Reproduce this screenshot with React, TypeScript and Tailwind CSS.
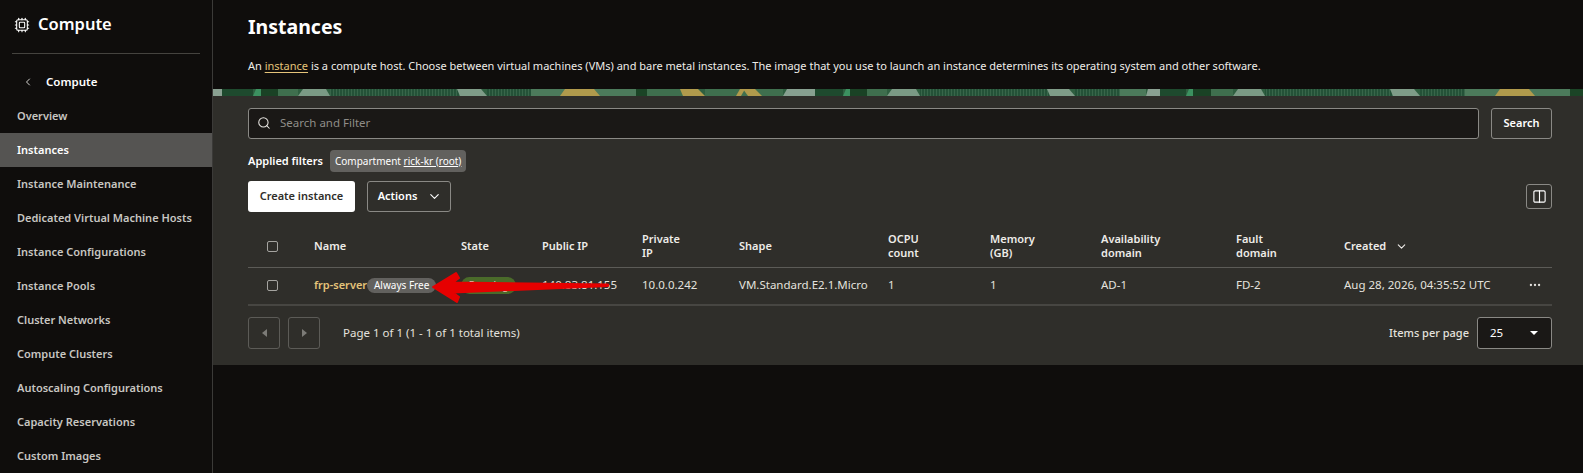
import React from 'react';
import { ChevronDown, ChevronLeft, Columns2, Cpu, MoreHorizontal, Search } from 'lucide-react';

const navItems = [
  'Overview',
  'Instances',
  'Instance Maintenance',
  'Dedicated Virtual Machine Hosts',
  'Instance Configurations',
  'Instance Pools',
  'Cluster Networks',
  'Compute Clusters',
  'Autoscaling Configurations',
  'Capacity Reservations',
  'Custom Images',
];

// banner art: [from x, to x, fill, left edge slant, right edge slant], in page pixels
const bannerBands: [number, number, string, number, number][] = [
  [213, 222, '#8aa192', 0, 2], [222, 253, '#1e4a2e', 0, 0], [253, 261, '#3c9160', 3, 3], [261, 278, '#1a4225', 0, 0],
  [278, 298, '#3f6f4e', 0, 0], [298, 330, '#7b9a85', 5, -4], [330, 460, 'url(#stripes)', 0, 0], [460, 487, '#7f9c88', -3, -6],
  [487, 531, 'url(#stripes)', 0, 0], [531, 636, '#4c7a5b', 0, 0], [560, 600, '#b09a4c', 5, -6],
  [636, 647, '#1b4426', 0, 0], [647, 683, '#3f6f4e', 0, 0], [683, 705, '#b09a4c', -3, -7], [705, 783, '#3f6f4e', 0, 0],
  [736, 741, '#b09a4c', 4, 4], [748, 762, '#b09a4c', -5, -7], [783, 815, '#87a090', 4, 0], [815, 843, '#1e4a2e', 0, 0],
  [843, 850, '#3c9160', 3, 3], [850, 867, '#1a4225', 0, 0], [867, 887, '#3f6f4e', 0, 0], [887, 920, '#7b9a85', 5, -4],
  [920, 1050, 'url(#stripes)', 0, 0], [1050, 1075, '#7f9c88', -3, -6], [1075, 1120, 'url(#stripes)', 0, 0], [1120, 1146, '#4c7a5b', 0, 0],
  [1146, 1160, '#8aa192', 2, 0], [1160, 1186, '#1e4a2e', 0, 0], [1186, 1193, '#3c9160', 3, 3], [1193, 1211, '#1a4225', 0, 0],
  [1211, 1233, '#3f6f4e', 0, 0], [1233, 1265, '#7b9a85', 5, -4], [1265, 1393, 'url(#stripes)', 0, 0], [1393, 1420, '#7f9c88', -3, -6],
  [1420, 1465, 'url(#stripes)', 0, 0], [1465, 1570, '#4c7a5b', 0, 0], [1495, 1535, '#b09a4c', 5, -6],
  [1570, 1583, '#1b4426', 0, 0],
];

const headers = [
  ['Name'],
  ['State'],
  ['Public IP'],
  ['Private', 'IP'],
  ['Shape'],
  ['OCPU', 'count'],
  ['Memory', '(GB)'],
  ['Availability', 'domain'],
  ['Fault', 'domain'],
];

const Checkbox = () => <span className="block w-[11px] h-[11px] border border-[#a5a4a0] rounded-[2px] ml-[19px]" />;

const App: React.FC = () => {
  const gridCols = 'grid grid-cols-[66px_147px_81px_100px_97px_149px_102px_111px_135px_108px_184px_1fr] items-center';

  return (
    <div className="flex h-[473px] w-[1583px] overflow-hidden bg-[#0f0d0c] text-white font-['Noto_Sans',sans-serif]">
      {/* Sidebar */}
      <aside className="w-[213px] shrink-0 border-r border-[#3b3a38]">
        <div className="mx-[12px] h-[54px] flex items-center gap-[8px] border-b border-[#45433f] pl-[2px] pb-[4px]">
          <Cpu size={16} strokeWidth={1.6} />
          <span className="text-[16.5px] font-semibold">Compute</span>
        </div>
        <div className="h-[45px] pt-[10px] flex items-center pl-[22px] gap-[12px] text-[11.5px] font-semibold">
          <ChevronLeft size={12} strokeWidth={2} className="text-[#d5d4d0]" />
          <span>Compute</span>
        </div>
        <nav className="flex flex-col">
          {navItems.map((item) => (
            <div
              key={item}
              className={`h-[34px] shrink-0 flex items-center pl-[17px] text-[11px] font-semibold ${item === 'Instances' ? 'bg-[#555452] text-white' : 'text-[#c8c6c2]'}`}
            >
              {item}
            </div>
          ))}
        </nav>
      </aside>

      {/* Main */}
      <main className="flex-1 min-w-0">
        <div className="h-[89px] pl-[35px]">
          <h1 className="text-[19.5px] font-bold leading-[32px] pt-[11px]">Instances</h1>
          <p className="text-[11px] mt-[14px] leading-[18px] text-[#eeece8]">
            An <span className="text-[#e5c47a] underline underline-offset-2">instance</span> is a compute host. Choose between virtual machines (VMs) and bare metal instances. The image that you use to launch an instance determines its operating system and other software.
          </p>
        </div>

        <svg className="block" width="1370" height="7" viewBox="213 0 1370 7">
          <defs>
            <pattern id="stripes" width="3" height="7" patternUnits="userSpaceOnUse">
              <rect width="3" height="7" fill="#245238" />
              <rect width="1" height="7" fill="#38664a" />
            </pattern>
          </defs>
          <rect x="213" y="0" width="1370" height="7" fill="#2f5f40" />
          {bannerBands.map(([from, to, fill, l, r]) => (
            <polygon key={from} points={`${from + l},0 ${to + r},0 ${to},7 ${from},7`} fill={fill} />
          ))}
        </svg>

        <section className="h-[269px] bg-[#2f2e2a] pl-[35px] pr-[31px] pt-[12px]">
          <div className="flex gap-[12px]">
            <div className="flex-1 h-[31px] bg-[#1a1816] border border-[#8a8985] rounded-[3px] flex items-center pl-[8px] pb-[1px] gap-[9px]">
              <Search size={14} strokeWidth={1.8} className="text-[#e8e6e2]" />
              <span className="text-[11.5px] text-[#8f8d88]">Search and Filter</span>
            </div>
            <button className="w-[61px] h-[31px] border border-[#8a8985] rounded-[3px] text-[11px] font-semibold">Search</button>
          </div>

          <div className="flex items-center mt-[11px] h-[22px]">
            <span className="text-[11px] font-semibold">Applied filters</span>
            <span className="ml-[7px] h-[22px] px-[5px] flex items-center bg-[#62615e] rounded-[4px] text-[10px]">
              Compartment&nbsp;<span className="underline">rick-kr (root)</span>
            </span>
          </div>

          <div className="flex items-center mt-[9px] h-[31px]">
            <button className="w-[107px] h-[31px] bg-white text-[#2f2e2a] rounded-[3px] text-[11px] font-semibold">Create instance</button>
            <button className="ml-[12px] w-[84px] h-[31px] border border-[#8a8985] rounded-[3px] text-[11px] font-semibold flex items-center justify-center gap-[10px] pl-[2px]">
              Actions
              <ChevronDown size={15} strokeWidth={1.8} />
            </button>
            <button className="ml-auto w-[26px] h-[25px] border border-[#8a8985] rounded-[3px] flex items-center justify-center">
              <Columns2 size={15} strokeWidth={1.8} />
            </button>
          </div>

          {/* Table */}
          <div className={`${gridCols} h-[56px] pt-[13px] border-b border-[#5c5b57] text-[11px] font-semibold leading-[14px] text-[#eeece8]`}>
            <Checkbox />
            {headers.map((lines) => (
              <span key={lines[0]} className="flex flex-col">
                {lines.map((line) => (
                  <span key={line}>{line}</span>
                ))}
              </span>
            ))}
            <span className="flex items-center gap-[9px]">
              Created <ChevronDown size={13} strokeWidth={2} />
            </span>
          </div>

          <div className={`${gridCols} relative h-[38px] pb-[2px] border-b-2 border-[#474642] text-[11.5px] text-[#e4e2de]`}>
            <Checkbox />
            <span className="flex items-center">
              <span className="text-[#e5c47a] font-semibold text-[11px]">frp-server</span>
              <span className="h-[15px] w-[69px] flex items-center justify-center rounded-full bg-[#62615e] text-[10px] text-white whitespace-nowrap">Always Free</span>
            </span>
            <span>
              <span className="inline-flex h-[17px] w-[55px] items-center justify-center rounded-full bg-[#4a6b2a] text-[10px]">Running</span>
            </span>
            <span>140.83.81.155</span>
            <span>10.0.0.242</span>
            <span className="whitespace-nowrap">VM.Standard.E2.1.Micro</span>
            <span>1</span>
            <span>1</span>
            <span>AD-1</span>
            <span>FD-2</span>
            <span className="whitespace-nowrap">Aug 28, 2026, 04:35:52 UTC</span>
            <MoreHorizontal size={14} className="justify-self-end mr-[24px]" />
            {/* annotation arrow */}
            <svg className="absolute left-[182px] top-[2px]" width="190" height="36" viewBox="0 0 190 36">
              <path
                d="M3 17 L26 3 L29 8 L23 12.5 L178 14.5 L178 16 L23 22.5 L29 27 L27 32 Z"
                fill="#e60000"
                stroke="#e60000"
                strokeWidth="2"
                strokeLinejoin="round"
              />
            </svg>
          </div>

          <div className="flex items-center mt-[11px] h-[32px]">
            <button className="w-[32px] h-[32px] border border-[#5c5b57] rounded-[3px] flex items-center justify-center">
              <span className="border-y-[4px] border-y-transparent border-r-[5px] border-r-[#7c7b77]" />
            </button>
            <button className="ml-[8px] w-[32px] h-[32px] border border-[#5c5b57] rounded-[3px] flex items-center justify-center">
              <span className="border-y-[4px] border-y-transparent border-l-[5px] border-l-[#7c7b77]" />
            </button>
            <span className="ml-[23px] text-[11.5px] text-[#e4e2de]">Page 1 of 1 (1 - 1 of 1 total items)</span>
            <span className="ml-auto text-[11px] font-medium text-[#e4e2de]">Items per page</span>
            <div className="ml-[8px] w-[75px] h-[32px] bg-[#1a1816] border border-[#8a8985] rounded-[3px] flex items-center justify-between pl-[12px] pr-[13px] text-[11.5px]">
              25
              <span className="border-x-[4px] border-x-transparent border-t-[4px] border-t-white" />
            </div>
          </div>
        </section>
      </main>
    </div>
  );
};

export default App;
